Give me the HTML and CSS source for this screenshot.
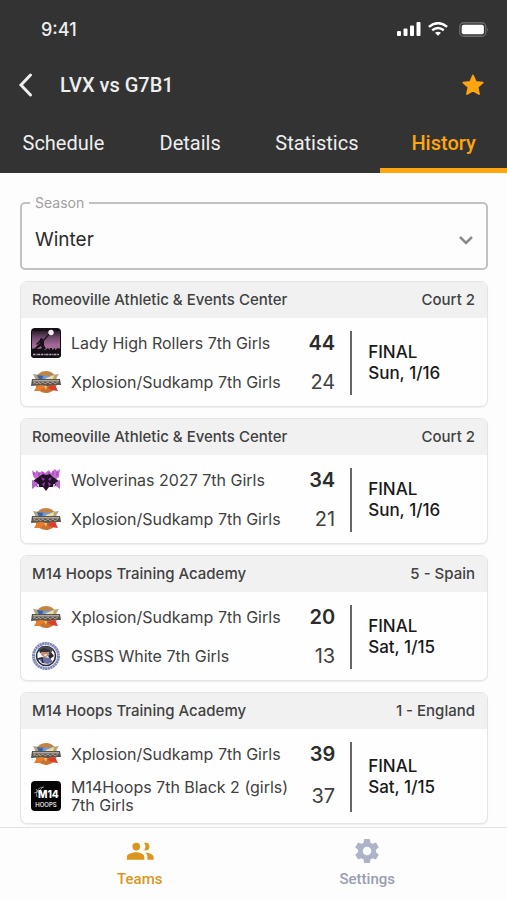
FILE: index.html
```html
<!DOCTYPE html>
<html lang="en">
<head>
<meta charset="utf-8">
<meta name="viewport" content="width=device-width, initial-scale=1">
<title>LVX vs G7B1 – History</title>
<link rel="stylesheet" href="styles.css">
</head>
<body>
<svg class="sprite" aria-hidden="true">
  <symbol id="xplosion" viewBox="0 0 30 30">
    <circle cx="15" cy="15" r="11" fill="#c58343"/>
    <path d="M2 7 9 8 15 10 21 8 28 7 24 13H5Z" fill="#b3a27c"/>
    <path d="M6 8 14 9 12 14 8 13Z" fill="#3163ae"/>
    <path d="M12 9 20 8 17 14 11 14Z" fill="#6f9ad2"/>
    <path d="M15 11 23 8 22 14H13Z" fill="#ecdf9b"/>
    <path d="M1 12 6 12 29 12 30 18 23 18 17 19 10 18 0 19Z" fill="#5a524c"/>
    <path d="M2 13H28V14.500H2Z" fill="#b0a79f"/>
    <path d="M3 17V15L6 17 8 15 9 17 12 15 14 17 17 15 19 17 22 15 24 17 27 15" fill="none" stroke="#c9bfb2" stroke-width=".7"/>
    <path d="M3 24 6 19 12 18 14 23 9 24Z" fill="#e77d2c"/>
    <path d="M16 20 24 18 27 24 19 23Z" fill="#df3a2e"/>
    <path d="M9 23 15 20 21 23 16 26Z" fill="#c9702a"/>
    <path d="M13 19 16 19 15 23Z" fill="#f0c46b"/>
  </symbol>
  <symbol id="rollers" viewBox="0 0 30 30">
    <linearGradient id="dusk" x1="0" y1="0" x2="0" y2="1"><stop offset="0" stop-color="#2c1d2c"/><stop offset=".35" stop-color="#6f4a6c"/><stop offset=".75" stop-color="#a26a97"/></linearGradient>
    <rect width="30" height="30" rx="4" fill="#151016"/>
    <path d="M1 3H29V22H1Z" fill="url(#dusk)"/>
    <circle cx="20" cy="4.500" r="2.700" fill="#f4eef0"/>
    <path d="M18.500 6.500 13 13 13 17 15 21H11L10 18 7 20H4L8 16 9 14 6 17 5 16 9 12 12 12 17.500 6Z" fill="#1a121b"/>
    <circle cx="10.500" cy="11.500" r="1.500" fill="#1a121b"/>
    <path d="M0 21 5 20 8 21 12 20 14 22 17 20 19 22V20H21V22L24 20V22L27 20 30 21V27Q30 30 26 30H4Q0 30 0 27Z" fill="#151016"/>
    <path d="M2 26.500H28" stroke="#b9a9b7" stroke-width="1.500" stroke-dasharray="2 .6 1 .7 3 .8"/>
  </symbol>
  <symbol id="wolverinas" viewBox="0 0 30 30">
    <path d="M1 5 4 8 6 5 8 8 11 6 14 8 18 5 20 8 24 4 26 6 29 4 28 12 24 15H5L2 11Z" fill="#c66bd6"/>
    <path d="M3 7V10M8 7V11M12 7V9M18 7V9M22 6V10M26 7V11" stroke="#8f3da5"/>
    <path d="M9 11 12 9 15 10 19 9 22 12 28 16 27 20 22 22 18 22 15 26 12 22 7 22 2 20 2 16Z" fill="#211126"/>
    <path d="M10 12 14 14 12 16ZM21 12 17 14 19 16ZM11 19 14 17 13 22ZM20 19 17 17 18 22Z" fill="#9b35b4"/>
    <path d="M1 15 7 18 5 21 1 24ZM29 15 24 18 25 21 29 24Z" fill="#ba61ca"/>
    <path d="M5 23 7 19 8 23M25 23 23 19 22 23" fill="none" stroke="#eadcf0"/>
  </symbol>
  <symbol id="gsbs" viewBox="0 0 30 30">
    <circle cx="15" cy="15" r="12.500" fill="none" stroke="#8288b8" stroke-width="3" stroke-dasharray="2.200 .4"/>
    <circle cx="15" cy="15" r="9.500" fill="#fff" stroke="#292a35" stroke-width="1.600"/>
    <path d="M7 8 11 5 19 6 22 9 19 13 13 14 9 12Z" fill="#4e4a5a"/>
    <circle cx="14" cy="12" r="4" fill="#c18c68"/>
    <path d="M9 9 13 7 19 9 18 11H9Z" fill="#30303d"/>
    <path d="M12 14 16 13 15 15Z" fill="#fff"/>
    <path d="M7 17 13 16 19 17 22 21 17 23 11 22Z" fill="#6c70a5"/>
    <path d="M20 11 23 15 19 18 17 15Z" fill="#292a35"/>
    <path d="M7 18 11 17 12 22" fill="none" stroke="#292a35" stroke-width="1.500"/>
  </symbol>
</svg>

<header class="header">
  <div class="status">
    <span>9:41</span>
    <span class="status-icons">
      <svg width="24" height="14" viewBox="0 0 24 14" fill="#fff" aria-hidden="true"><rect x="0" y="9" width="4" height="5" rx="1"/><rect x="6.500" y="6.500" width="4" height="7.500" rx="1"/><rect x="13" y="3.500" width="4" height="10.500" rx="1"/><rect x="19.500" y="0" width="4" height="14" rx="1"/></svg>
      <svg width="20" height="14" viewBox="0 0 20 14" fill="none" stroke="#fff" stroke-width="2.500" aria-hidden="true"><path d="M.9 4.900Q10-2.600 19.100 4.900M4.200 8.300Q10 3.700 15.800 8.300"/><path d="M7 10.800Q10 8.600 13 10.800L10 13.800Z" fill="#fff" stroke="none"/></svg>
      <svg class="battery" width="30" height="15" viewBox="0 0 30 15" aria-hidden="true"><rect x=".75" y=".75" width="26" height="13.500" rx="4" fill="none" stroke="#6c6c6c" stroke-width="1.300"/><rect x="2.700" y="2.700" width="22.200" height="9.600" rx="2" fill="#fff"/><path d="M28.300 5.500Q30 7.500 28.300 9.500Z" fill="#777"/></svg>
    </span>
  </div>
  <div class="titlebar">
    <button class="icon-button" type="button" aria-label="Back"><svg width="16" height="24" viewBox="0 0 16 24" fill="none" stroke="#eee" stroke-width="3" stroke-linecap="round" stroke-linejoin="miter"><path d="M12.500 2 3 12 12.500 22"/></svg></button>
    <h1>LVX vs G7B1</h1>
    <button class="icon-button" type="button" aria-label="Favorite"><svg width="22" height="22" viewBox="0 0 22 22" fill="#ffa50f" stroke="#ffa50f" stroke-width="1.800" stroke-linejoin="round"><path d="M11 1.500 13.800 7.900 20.700 8.600 15.500 13.200 17 20 11 16.500 5 20 6.500 13.200 1.300 8.600 8.200 7.900Z"/></svg></button>
  </div>
  <nav class="tabs" aria-label="Sections">
    <a href="#schedule">Schedule</a>
    <a href="#details">Details</a>
    <a href="#statistics">Statistics</a>
    <a class="active" href="#history" aria-current="page">History</a>
  </nav>
</header>

<main class="content">
  <fieldset class="season">
    <legend><label for="season">Season</label></legend>
    <div class="select-row">
      <select id="season"><option>Winter</option></select>
      <svg width="14" height="9" viewBox="0 0 14 9" fill="none" stroke="#8b8b8b" stroke-width="2.500" aria-hidden="true"><path d="M1 1 7 7 13 1"/></svg>
    </div>
  </fieldset>

  <article class="game">
    <header><h2>Romeoville Athletic &amp; Events Center</h2><span>Court 2</span></header>
    <div class="game-body">
      <div class="teams">
        <div class="team"><svg class="logo" aria-hidden="true"><use href="#rollers"/></svg><span class="name">Lady High Rollers 7th Girls</span><strong class="score">44</strong></div>
        <div class="team"><svg class="logo" aria-hidden="true"><use href="#xplosion"/></svg><span class="name">Xplosion/Sudkamp 7th Girls</span><span class="score">24</span></div>
      </div>
      <div class="result"><span>FINAL</span><span>Sun, 1/16</span></div>
    </div>
  </article>

  <article class="game">
    <header><h2>Romeoville Athletic &amp; Events Center</h2><span>Court 2</span></header>
    <div class="game-body">
      <div class="teams">
        <div class="team"><svg class="logo" aria-hidden="true"><use href="#wolverinas"/></svg><span class="name">Wolverinas 2027 7th Girls</span><strong class="score">34</strong></div>
        <div class="team"><svg class="logo" aria-hidden="true"><use href="#xplosion"/></svg><span class="name">Xplosion/Sudkamp 7th Girls</span><span class="score">21</span></div>
      </div>
      <div class="result"><span>FINAL</span><span>Sun, 1/16</span></div>
    </div>
  </article>

  <article class="game">
    <header><h2>M14 Hoops Training Academy</h2><span>5 - Spain</span></header>
    <div class="game-body">
      <div class="teams">
        <div class="team"><svg class="logo" aria-hidden="true"><use href="#xplosion"/></svg><span class="name">Xplosion/Sudkamp 7th Girls</span><strong class="score">20</strong></div>
        <div class="team"><svg class="logo" aria-hidden="true"><use href="#gsbs"/></svg><span class="name">GSBS White 7th Girls</span><span class="score">13</span></div>
      </div>
      <div class="result"><span>FINAL</span><span>Sat, 1/15</span></div>
    </div>
  </article>

  <article class="game">
    <header><h2>M14 Hoops Training Academy</h2><span>1 - England</span></header>
    <div class="game-body">
      <div class="teams">
        <div class="team"><svg class="logo" aria-hidden="true"><use href="#xplosion"/></svg><span class="name">Xplosion/Sudkamp 7th Girls</span><strong class="score">39</strong></div>
        <div class="team">
          <svg class="logo" viewBox="0 0 30 30" aria-hidden="true">
            <rect width="30" height="30" rx="4" fill="#050505"/>
            <path d="M6 16A7 7 0 0 1 13 6M3 12Q8 12 12 6M5 8 9 14" fill="none" stroke="#aaa" stroke-width=".8"/>
            <text class="logo-number" x="7" y="17">M14</text>
            <text class="logo-name" x="15" y="26" text-anchor="middle">HOOPS</text>
          </svg>
          <span class="name">M14Hoops 7th Black 2 (girls) 7th Girls</span><span class="score">37</span>
        </div>
      </div>
      <div class="result"><span>FINAL</span><span>Sat, 1/15</span></div>
    </div>
  </article>
</main>

<nav class="bottom-nav" aria-label="Main">
  <a class="active" href="#teams">
    <svg width="30" height="30" viewBox="0 0 24 24" fill="currentColor" aria-hidden="true"><path d="M16.500 11.500a3.100 3.100 0 1 0 0-6.200 3.500 3.500 0 0 0-1.200.2 5 5 0 0 1 0 5.800 3.500 3.500 0 0 0 1.200.2ZM9 11.500a3.100 3.100 0 1 0 0-6.200 3.100 3.100 0 0 0 0 6.200ZM9 13c-2.500 0-7.500 1.200-7.500 3.700V19h14v-2.300C15.500 14.200 11.500 13 9 13ZM16.200 13.100c1 .8 1.700 2 1.700 3.600V19h5v-2.300c0-2.200-3.800-3.300-6.700-3.600Z"/></svg>
    Teams
  </a>
  <a href="#settings">
    <svg width="30" height="30" viewBox="0 0 24 24" fill="currentColor" aria-hidden="true"><path d="M19.140 12.940c.04-.3.060-.61.060-.94s-.02-.64-.07-.94l2.030-1.580a.49.49 0 0 0 .12-.61l-1.920-3.320a.49.490 0 0 0-.59-.22l-2.390.96a7 7 0 0 0-1.620-.94l-.36-2.540a.48.480 0 0 0-.48-.41h-3.840a.47.470 0 0 0-.47.410l-.36 2.540c-.59.240-1.130.57-1.620.94l-2.390-.96a.48.480 0 0 0-.59.220L2.740 8.870a.47.470 0 0 0 .12.610l2.030 1.580a6 6 0 0 0-.02 1.880l-2.030 1.580a.49.490 0 0 0-.12.610l1.920 3.320c.12.220.37.290.59.220l2.390-.96c.5.380 1.030.7 1.620.94l.36 2.540c.05.240.24.410.48.410h3.840c.24 0 .44-.17.470-.41l.36-2.540a7 7 0 0 0 1.620-.94l2.390.96c.22.080.47 0 .59-.22l1.920-3.320a.47.470 0 0 0-.12-.61ZM12 15.400a3.400 3.400 0 1 1 0-6.800 3.400 3.400 0 0 1 0 6.800Z"/></svg>
    Settings
  </a>
</nav>
</body>
</html>
```
FILE: styles.css
```css
* { box-sizing: border-box; }

body {
  margin: 0;
  min-height: 100vh;
  display: flex;
  flex-direction: column;
  background: #fdfdfd;
  color: #414141;
  font-family: Inter, sans-serif;
}

a { color: inherit; text-decoration: none; }
h1, h2 { margin: 0; }
.sprite { position: absolute; width: 0; height: 0; }

.header { background: #333; color: #eee; }

.status {
  display: flex;
  align-items: center;
  justify-content: space-between;
  height: 58px;
  padding: 0 18px 0 41px;
  font-size: 18px;
  font-weight: 500;
}
.status-icons { display: flex; align-items: center; gap: 7px; }
.battery { margin-left: 4px; }

.titlebar {
  display: flex;
  align-items: center;
  height: 54px;
  padding: 0 23px 0 18px;
}
.titlebar h1 {
  flex: 1;
  padding-left: 26px;
  font: 500 20px/24px Roboto, sans-serif;
}
.icon-button {
  display: flex;
  padding: 0;
  border: 0;
  background: none;
}

.tabs {
  display: grid;
  grid-template-columns: repeat(4, 1fr);
  font: 400 20px/24px Roboto, sans-serif;
  text-align: center;
}
.tabs a { padding: 19px 0 13px; border-bottom: 5px solid transparent; }
.tabs .active { color: #ffa50f; border-color: #ffa50f; font-weight: 500; }

.content {
  display: flex;
  flex-direction: column;
  gap: 11px;
  padding: 21px 19px 0 20px;
}

.season {
  min-width: 0;
  margin: 0;
  padding: 0 13px 0 8px;
  border: 2px solid #c2c2c2;
  border-radius: 5px;
}
.season legend {
  padding: 0 5px;
  color: #a0a0a0;
  font-size: 14px;
  line-height: 18px;
}
.select-row { display: flex; align-items: center; height: 56px; }
.season select {
  flex: 1;
  appearance: none;
  padding: 0 5px;
  border: 0;
  background: none;
  color: #2c2c2c;
  font: 400 19px/24px Inter, sans-serif;
}
.select-row svg { margin-left: -14px; pointer-events: none; }

.game {
  border: 1px solid #e4e4e4;
  border-radius: 7px;
  background: #fefefe;
  box-shadow: 0 1px 1px #eee;
  overflow: hidden;
}
.game > header {
  display: flex;
  justify-content: space-between;
  align-items: center;
  height: 36px;
  padding: 0 12px 2px 11px;
  background: #f1f1f1;
  font-size: 15px;
  font-weight: 500;
}
.game h2 { font-size: 15px; font-weight: 500; }

.game-body {
  display: grid;
  grid-template-columns: 7fr 3fr;
  padding: 10px 0 9px 10px;
}
.teams { display: grid; gap: 9px; }
.team {
  display: grid;
  grid-template-columns: 30px 1fr 32px;
  align-items: center;
  gap: 10px;
  min-height: 30px;
  padding-right: 15px;
}
.logo { width: 30px; height: 30px; }
.name { font-size: 16px; line-height: 18px; }
.score { font-size: 20px; line-height: 24px; text-align: right; }
strong.score { font-weight: 600; color: #2c2c2c; }

.result {
  display: flex;
  flex-direction: column;
  justify-content: center;
  margin: 3px 0 2px;
  padding-left: 16px;
  border-left: 2px solid #666;
  color: #1a1a1a;
  font-size: 17px;
  font-weight: 500;
  line-height: 21px;
}

.logo-number { font: 800 10px/10px Inter, sans-serif; fill: #fff; }
.logo-name { font: 500 6px/6px Inter, sans-serif; fill: #fff; }

.bottom-nav {
  position: sticky;
  bottom: 0;
  display: grid;
  grid-template-columns: 1fr 1fr;
  margin-top: auto;
  padding: 8px 26px 12px;
  border-top: 1px solid #e2e2e2;
  background: #fdfdfd;
  color: #9a9db3;
  font: 500 15px/18px Roboto, sans-serif;
}
.bottom-nav a {
  display: flex;
  flex-direction: column;
  align-items: center;
  gap: 4px;
}
.bottom-nav a svg { color: #afb3ca; }
.bottom-nav .active, .bottom-nav .active svg { color: #dc961e; }
```
